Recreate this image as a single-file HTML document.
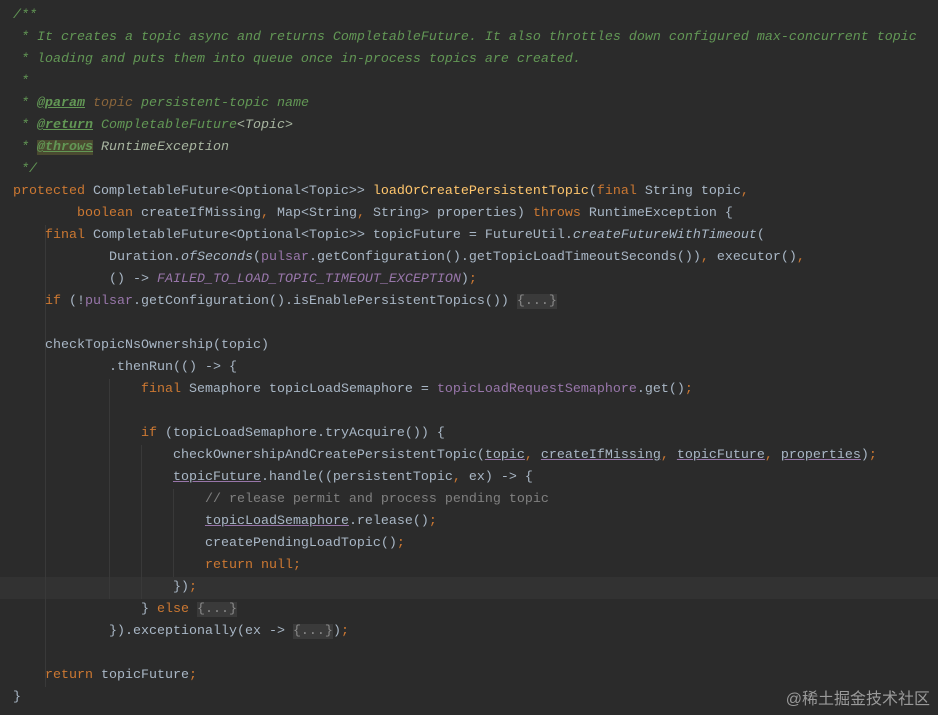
<!DOCTYPE html>
<html><head><meta charset="utf-8"><style>
body{margin:0;width:938px;height:715px;background:#2b2b2b;overflow:hidden;position:relative;font-family:"Liberation Mono",monospace;font-size:13.33px;color:#a9b7c6}
.l{position:absolute;left:13px;height:22px;line-height:22px;white-space:pre}
.k{color:#cc7832}.c{color:#629755;font-style:italic}.t{color:#629755;font-weight:bold;text-decoration:underline;font-style:italic}
.g{color:#808080}.m{color:#ffc66d}.i{font-style:italic}.p{color:#9876aa}.pi{color:#9876aa;font-style:italic}
.u{text-decoration:underline;text-decoration-color:#9876aa}
.f{background:#3a3a3a;color:#8a8a8a}
.tv{color:#a8b5a0;font-style:italic}
.hl{position:absolute;left:0;width:938px;height:22px;background:#323232}
.ig{position:absolute;width:1px;background:#393939}
.wm{position:absolute;right:8px;bottom:6px;color:#9a9a9a;font-family:"Liberation Sans","Noto Sans CJK SC",sans-serif;font-size:16px}
</style></head><body>
<div class="hl" style="top:577px"></div>
<div class="ig" style="left:45px;top:225px;height:462px"></div>
<div class="ig" style="left:109px;top:379px;height:220px"></div>
<div class="ig" style="left:141px;top:445px;height:154px"></div>
<div class="ig" style="left:173px;top:489px;height:88px"></div>
<div class="l c" style="top:5px">/**</div>
<div class="l c" style="top:27px"> * It creates a topic async and returns CompletableFuture. It also throttles down configured max-concurrent topic</div>
<div class="l c" style="top:49px"> * loading and puts them into queue once in-process topics are created.</div>
<div class="l c" style="top:71px"> *</div>
<div class="l c" style="top:93px"> * <span class="t">@param</span> <span style="color:#8a653b">topic</span> persistent-topic name</div>
<div class="l c" style="top:115px"> * <span class="t">@return</span> CompletableFuture<span class="tv">&lt;Topic&gt;</span></div>
<div class="l c" style="top:137px"> * <span class="t" style="background:#4a4a30">@throws</span> <span class="tv">RuntimeException</span></div>
<div class="l c" style="top:159px"> */</div>
<div class="l" style="top:181px"><span class="k">protected</span> CompletableFuture&lt;Optional&lt;Topic&gt;&gt; <span class="m">loadOrCreatePersistentTopic</span>(<span class="k">final</span> String topic<span class="k">,</span></div>
<div class="l" style="top:203px">        <span class="k">boolean</span> createIfMissing<span class="k">,</span> Map&lt;String<span class="k">,</span> String&gt; properties) <span class="k">throws</span> RuntimeException {</div>
<div class="l" style="top:225px">    <span class="k">final</span> CompletableFuture&lt;Optional&lt;Topic&gt;&gt; topicFuture = FutureUtil.<span class="i">createFutureWithTimeout</span>(</div>
<div class="l" style="top:247px">            Duration.<span class="i">ofSeconds</span>(<span class="p">pulsar</span>.getConfiguration().getTopicLoadTimeoutSeconds())<span class="k">,</span> executor()<span class="k">,</span></div>
<div class="l" style="top:269px">            () -&gt; <span class="pi">FAILED_TO_LOAD_TOPIC_TIMEOUT_EXCEPTION</span>)<span class="k">;</span></div>
<div class="l" style="top:291px">    <span class="k">if</span> (!<span class="p">pulsar</span>.getConfiguration().isEnablePersistentTopics()) <span class="f">{...}</span></div>
<div class="l" style="top:335px">    checkTopicNsOwnership(topic)</div>
<div class="l" style="top:357px">            .thenRun(() -&gt; {</div>
<div class="l" style="top:379px">                <span class="k">final</span> Semaphore topicLoadSemaphore = <span class="p">topicLoadRequestSemaphore</span>.get()<span class="k">;</span></div>
<div class="l" style="top:423px">                <span class="k">if</span> (topicLoadSemaphore.tryAcquire()) {</div>
<div class="l" style="top:445px">                    checkOwnershipAndCreatePersistentTopic(<span class="u">topic</span><span class="k">,</span> <span class="u">createIfMissing</span><span class="k">,</span> <span class="u">topicFuture</span><span class="k">,</span> <span class="u">properties</span>)<span class="k">;</span></div>
<div class="l" style="top:467px">                    <span class="u">topicFuture</span>.handle((persistentTopic<span class="k">,</span> ex) -&gt; {</div>
<div class="l g" style="top:489px">                        // release permit and process pending topic</div>
<div class="l" style="top:511px">                        <span class="u">topicLoadSemaphore</span>.release()<span class="k">;</span></div>
<div class="l" style="top:533px">                        createPendingLoadTopic()<span class="k">;</span></div>
<div class="l" style="top:555px">                        <span class="k">return null;</span></div>
<div class="l" style="top:577px">                    })<span class="k">;</span></div>
<div class="l" style="top:599px">                } <span class="k">else</span> <span class="f">{...}</span></div>
<div class="l" style="top:621px">            }).exceptionally(ex -&gt; <span class="f">{...}</span>)<span class="k">;</span></div>
<div class="l" style="top:665px">    <span class="k">return</span> topicFuture<span class="k">;</span></div>
<div class="l" style="top:687px">}</div>
<div class="wm">@稀土掘金技术社区</div>
</body></html>
